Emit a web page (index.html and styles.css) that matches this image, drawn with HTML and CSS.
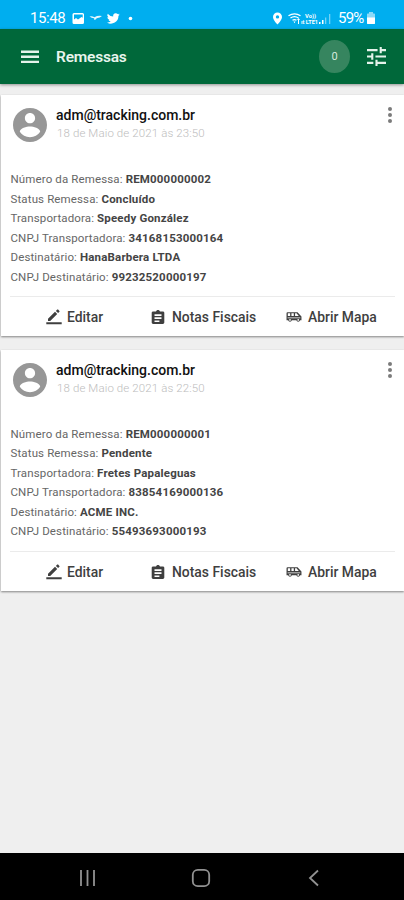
FILE: index.html
```
<!DOCTYPE html>
<html lang="pt-BR">
<head>
<meta charset="utf-8">
<title>Remessas</title>
<link rel="stylesheet" href="styles.css">
</head>
<body>
<svg class="defs" aria-hidden="true">
  <symbol id="person" viewBox="2 2 20 20"><path d="M12 2C6.48 2 2 6.48 2 12s4.48 10 10 10 10-4.48 10-10S17.520 2 12 2zm0 3c1.660 0 3 1.340 3 3s-1.340 3-3 3-3-1.340-3-3 1.340-3 3-3zm0 14.200c-2.500 0-4.710-1.280-6-3.220.030-1.990 4-3.080 6-3.080 1.990 0 5.970 1.090 6 3.080-1.290 1.940-3.500 3.220-6 3.220z"/></symbol>
  <symbol id="edit" viewBox="0 0 16 16"><path d="M2 9.800V12h2.200l7-7L9 2.800zM9.900 1.900l2.200 2.200 1.300-1.300a.7.7 0 0 0 0-.9L12.100.6a.7.7 0 0 0-.9 0zM.3 13.200h15.400v2H.3z"/></symbol>
  <symbol id="clip" viewBox="3 1 18 20"><path d="M19 3h-4.180C14.400 1.840 13.300 1 12 1s-2.400.84-2.820 2H5c-1.100 0-2 .9-2 2v14c0 1.100.9 2 2 2h14c1.100 0 2-.9 2-2V5c0-1.100-.9-2-2-2zM7 7h10v2.500H7zm0 4.500h10V14H7zm0 4.500h7v2H7z" fill-rule="evenodd"/></symbol>
  <symbol id="bus" viewBox="0 0 15 11"><path fill-rule="evenodd" d="M1.500 1h9.300L14.500 5v3.500h-1.300a1.800 1.800 0 0 1-3.500 0H5.500a1.800 1.800 0 0 1-3.500 0H.5V2a1 1 0 0 1 1-1zM1.700 2.100v2.500h2.200V2.100zm3.400 0v2.500h2.200V2.100zm3.400 0v2.500H12L9.900 2.100zM1.500 5.900v.7h11.900v-.7zM3.750 7.400a.8.8 0 1 0 0 1.600.8.8 0 0 0 0-1.600zm7.700 0a.8.8 0 1 0 0 1.600.8.8 0 0 0 0-1.600z"/></symbol>
</svg>
<header class="status">
  <span class="clock">15:48</span>
  <svg class="notif" width="62" height="14" viewBox="0 0 62 14">
    <path fill-rule="evenodd" d="M2 2h8.500q1.500 0 1.500 1.500v8q0 1.500-1.500 1.500H2Q.5 13 .5 11.500v-8Q.5 2 2 2zM2 3.500v5l2-1.500 2 1.500 3.500-2.500 1.200.8V3.500z"/>
    <path d="M17.500 5.500q2.500-.8 5 .8 3-2 7.500-1.300-2 1.700-5.300 2.300-1 1.900-2.700 1.500.5-1 0-1.500-2.500 0-4.500-1.800z" opacity=".9"/>
    <path transform="translate(35 1) scale(.54)" d="M23.600 4.600a9 9 0 0 1-2.800.8 4.900 4.900 0 0 0 2.100-2.700 10 10 0 0 1-3.100 1.200 4.900 4.900 0 0 0-8.400 4.500A14 14 0 0 1 1.300 3.200a4.900 4.900 0 0 0 1.500 6.500 5 5 0 0 1-2.200-.6 4.900 4.900 0 0 0 3.900 4.900 5 5 0 0 1-2.200.1 4.900 4.900 0 0 0 4.600 3.400A10 10 0 0 1 0 19.500 14 14 0 0 0 21.200 7a10 10 0 0 0 2.400-2.400z"/>
    <circle cx="58.500" cy="7.500" r="1.800"/>
  </svg>
  <svg class="signal" width="62" height="15" viewBox="0 0 62 15">
    <path fill-rule="evenodd" d="M5.500 1.500a4.500 4.500 0 0 1 4.500 4.500c0 3-4.500 7.500-4.500 7.500S1 9 1 6a4.500 4.500 0 0 1 4.500-4.500zm0 2.700a1.700 1.700 0 1 0 0 3.400 1.700 1.700 0 0 0 0-3.400z"/>
    <g fill="none" stroke="#fff" stroke-width="1.300"><path d="M16.500 4.800q6-4 12 0M18.500 7q4-2.800 8 0M20.500 9.300q2-1.500 4 0"/></g>
    <path d="M21.500 10.500h2l-1 1.800zM25 9l1.500-2L28 9h-1v4h-1V9z"/>
    <text class="volte" x="33" y="7" textLength="11" lengthAdjust="spacingAndGlyphs">Vo))</text>
    <text class="volte" x="29" y="13" textLength="17" lengthAdjust="spacingAndGlyphs">ıt LTE1</text>
    <path d="M47 11h1.500v2H47zM50 9h1.500v4H50z"/><path d="M53 6.500h1.300V13H53zM57 3h1.300v10H57z" opacity=".45"/>
  </svg>
  <span class="battery">59%</span>
  <svg width="10" height="14" viewBox="0 0 10 14"><path d="M3 1h4v1.500h1.200q.8 0 .8.800v9q0 .7-.8.7H1.800q-.8 0-.8-.7v-9q0-.8.8-.8H3z" opacity=".55"/><path d="M1 6.500h8v5.800q0 .7-.8.7H1.800q-.8 0-.8-.7z"/></svg>
</header>
<nav class="toolbar">
  <svg class="menu" width="18" height="14" viewBox="0 0 18 14"><path d="M0 .5h18v2.400H0zM0 5.600h18V8H0zM0 10.700h18v2.400H0z"/></svg>
  <h1>Remessas</h1>
  <span class="count">0</span>
  <svg class="tune" width="19" height="19" viewBox="3 3 18 18"><path d="M3 17v2h6v-2zM3 5v2h10V5zm10 16v-2h8v-2h-8v-2h-2v6zM7 9v2H3v2h4v2h2V9zm14 4v-2H11v2zm-6-4h2V7h4V5h-4V3h-2z"/></svg>
</nav>
<main>
  <article class="card">
    <header class="head">
      <svg class="avatar"><use href="#person"/></svg>
      <div><h2>adm@tracking.com.br</h2><time>18 de Maio de 2021 às 23:50</time></div>
      <span class="dots"><i></i><i></i><i></i></span>
    </header>
    <div class="body">
      <p>Número da Remessa: <b>REM000000002</b></p>
      <p>Status Remessa: <b>Concluído</b></p>
      <p>Transportadora: <b>Speedy González</b></p>
      <p>CNPJ Transportadora: <b>34168153000164</b></p>
      <p>Destinatário: <b>HanaBarbera LTDA</b></p>
      <p>CNPJ Destinatário: <b>99232520000197</b></p>
    </div>
    <footer class="actions">
      <a class="edit"><svg><use href="#edit"/></svg>Editar</a>
      <a class="notes"><svg><use href="#clip"/></svg>Notas Fiscais</a>
      <a class="map"><svg><use href="#bus"/></svg>Abrir Mapa</a>
    </footer>
  </article>
  <article class="card">
    <header class="head">
      <svg class="avatar"><use href="#person"/></svg>
      <div><h2>adm@tracking.com.br</h2><time>18 de Maio de 2021 às 22:50</time></div>
      <span class="dots"><i></i><i></i><i></i></span>
    </header>
    <div class="body">
      <p>Número da Remessa: <b>REM000000001</b></p>
      <p>Status Remessa: <b>Pendente</b></p>
      <p>Transportadora: <b>Fretes Papaleguas</b></p>
      <p>CNPJ Transportadora: <b>83854169000136</b></p>
      <p>Destinatário: <b>ACME INC.</b></p>
      <p>CNPJ Destinatário: <b>55493693000193</b></p>
    </div>
    <footer class="actions">
      <a class="edit"><svg><use href="#edit"/></svg>Editar</a>
      <a class="notes"><svg><use href="#clip"/></svg>Notas Fiscais</a>
      <a class="map"><svg><use href="#bus"/></svg>Abrir Mapa</a>
    </footer>
  </article>
</main>
<footer class="system">
  <svg width="18" height="18" viewBox="0 0 18 18"><path d="M2 1v16M8.500 1v16M15 1v16"/></svg>
  <svg width="20" height="20" viewBox="0 0 20 20"><rect x="1.800" y="1.800" width="16.400" height="16.400" rx="5"/></svg>
  <svg width="12" height="18" viewBox="0 0 12 18"><path d="M10 1.500 2 9l8 7.500"/></svg>
</footer>
</body>
</html>
```
FILE: styles.css
```
* { box-sizing: border-box; }
body {
  margin: 0;
  height: 900px;
  display: flex;
  flex-direction: column;
  background: #efefef;
  font-family: Roboto, "Liberation Sans", sans-serif;
  overflow: hidden;
}
h1, h2, p { margin: 0; }
.defs { display: none; }
.status {
  height: 29px;
  flex: none;
  display: flex;
  align-items: center;
  padding: 7px 28px 0 30px;
  background: #00aeef;
  color: #fff;
  fill: #fff;
  font-size: 15px;
}
.status > svg { flex: none; }
.clock { width: 36px; letter-spacing: -0.4px; }
.notif { margin-left: 6px; }
.signal { margin-left: auto; }
.battery { width: 28px; margin-left: 4px; letter-spacing: -0.8px; }
.volte { font-size: 6px; font-weight: 700; }
.toolbar {
  height: 55px;
  flex: none;
  display: flex;
  align-items: center;
  padding: 0 18px 0 21px;
  background: #00683a;
  fill: #e5f3eb;
  box-shadow: 0 1px 3px rgba(0, 0, 0, .4);
}
.toolbar h1 {
  margin-left: 17px;
  color: #e8f5ed;
  font-size: 15.500px;
  font-weight: 600;
  letter-spacing: -0.2px;
  line-height: 20px;
}
.count {
  width: 31px;
  height: 33px;
  margin-left: auto;
  border-radius: 50%;
  background: #36855f;
  color: #d5eade;
  font-size: 11px;
  line-height: 33px;
  text-align: center;
}
.tune { margin-left: 17px; }
main { flex: 1; padding-top: 11px; }
.card {
  height: 241px;
  margin: 0 0 13.500px 1px;
  background: #fff;
  box-shadow: 0 1px 2px rgba(0, 0, 0, .45);
}
.head { display: flex; height: 75px; padding: 12px 12px 0 12px; }
.avatar { width: 34px; height: 34px; margin: 1px 9px 0 0; fill: #979797; }
.head h2 {
  color: #111;
  font-size: 14px;
  font-weight: 500;
  line-height: 17px;
}
.head time {
  display: block;
  padding-left: 1px;
  color: #bdbdbd;
  font-size: 11.500px;
  font-weight: 300;
  letter-spacing: .11px;
  line-height: 18px;
}
.dots {
  display: flex;
  flex-direction: column;
  gap: 2px;
  margin-left: auto;
}
.dots i { width: 4px; height: 4px; border-radius: 50%; background: #7b7b7b; }
.body { height: 127px; margin: 0 9px; border-bottom: 1px solid #ebebeb; }
.body p {
  height: 19.600px;
  padding-left: .5px;
  color: #666;
  font-size: 11.500px;
  letter-spacing: .13px;
  line-height: 19.600px;
  white-space: nowrap;
}
.body b { color: #444; font-weight: 700; letter-spacing: .18px; }
.actions { display: flex; height: 40px; align-items: center; padding-left: 45px; }
.actions a {
  display: flex;
  align-items: center;
  color: #3f3f3f;
  fill: #3f3f3f;
  font-size: 13.900px;
  font-weight: 500;
  white-space: nowrap;
}
.edit { width: 105px; }
.notes { width: 135px; }
.edit svg { width: 16px; height: 16px; margin-right: 5px; }
.notes svg { width: 14px; height: 14px; margin-right: 7px; }
.map svg { width: 16px; height: 12px; margin-right: 6px; }
.system {
  height: 47px;
  flex: none;
  display: flex;
  align-items: center;
  justify-content: space-between;
  padding: 2px 84px 0 79px;
  background: #000;
  fill: none;
  stroke: #929292;
  stroke-width: 1.800;
}
.system svg:nth-child(2) { margin-right: 3px; }
```
